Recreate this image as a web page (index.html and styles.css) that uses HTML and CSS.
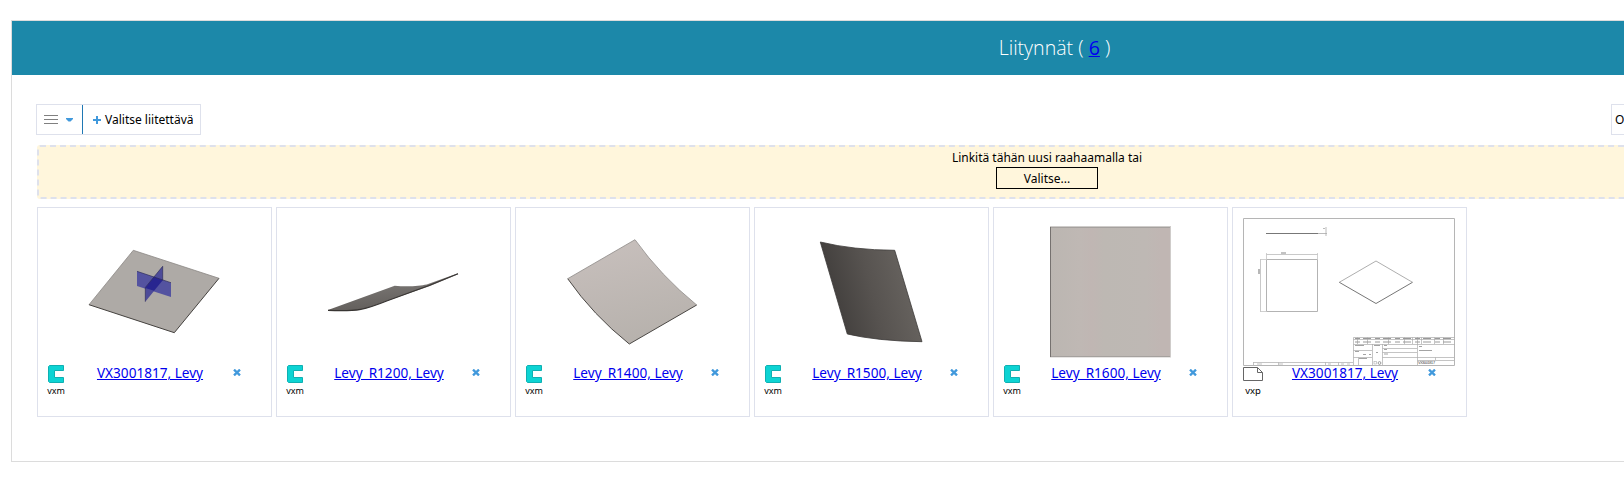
FILE: index.html
```html
<!DOCTYPE html>
<html lang="fi">
<head>
    <meta charset="UTF-8">
    <meta name="viewport" content="width=device-width, initial-scale=1.0">
    <title>Liitynnät</title>
    <link rel="stylesheet" href="styles.css">
</head>
<body>

    <!-- shared icons -->
    <svg class="symbols" width="0" height="0">
        <symbol id="icon-vxm" viewBox="0 0 16 18">
            <path d="M1.5 .5H15.5V5.5H6.5V12.5H15.5V17.5H1.5L.5 16.5V1.5Z" fill="#0dd3d3" stroke="#0fb0b2"/>
        </symbol>
        <symbol id="icon-close" viewBox="0 0 8 7">
            <path d="M1 .6L7 6.4M7 .6L1 6.4" stroke="#4199dc" stroke-width="2.3"/>
        </symbol>
    </svg>

    <div class="panel">
        <div class="panel-header">Liitynnät ( <a href="#">6</a> )</div>
        <div class="panel-body">

            <div class="toolbar">
                <div class="button-group">
                    <button class="menu-button">
                        <svg width="30" height="9" viewBox="0 0 30 9">
                            <path d="M0 .5H14M0 4.5H14M0 8.5H14" stroke="#808080"/>
                            <path d="M22 3H29V4L26.5 6.5H24.5L22 4Z" fill="#4199dc"/>
                        </svg>
                    </button>
                    <button class="add-button">
                        <svg width="8" height="8" viewBox="0 0 8 8"><path d="M4 0V8M0 4H8" stroke="#4199dc" stroke-width="2"/></svg>
                        <span>Valitse liitettävä</span>
                    </button>
                </div>
                <button class="options-button">O</button>
            </div>

            <div class="dropzone">
                <span class="drop-text">Linkitä tähän uusi raahaamalla tai</span>
                <button class="choose-button">Valitse...</button>
            </div>

            <div class="cards">
                <div class="card">
                    <svg class="thumb" viewBox="0 0 233 157">
                        <path d="M95.3 42.3L181 70.3L136.3 124.7L51 96.7Z" fill="#aeaaa6"/>
                        <path d="M51 96.7L95.3 42.3L181 70.3" fill="none" stroke="#8b8885" stroke-width=".8"/>
                        <path d="M51 96.7L136.3 124.7L181 70.3" fill="none" stroke="#45423f"/>
                        <path d="M99 63.3L133 74.7V89L99 78Z" fill="#5453a0"/>
                        <path d="M124.7 58.3V72.3L107.3 93.7V79.5Z" fill="#4d4b99"/>
                        <path d="M116 69L124.7 72.3L116 82.8L107.3 80Z" fill="#282590"/>
                        <path d="M99 63.3L133 74.7M124.7 58.3L107.3 79.5V93.7M124.7 58.3V72.3" fill="none" stroke="#252450" stroke-width=".6"/>
                    </svg>
                    <div class="card-footer">
                        <div class="file-type"><svg width="16" height="18"><use href="#icon-vxm"/></svg><span>vxm</span></div>
                        <a class="card-link" href="#">VX3001817, Levy</a>
                        <svg class="remove" width="8" height="7"><use href="#icon-close"/></svg>
                    </div>
                </div>

                <div class="card">
                    <svg class="thumb" viewBox="0 0 233 157">
                        <defs>
                            <linearGradient id="shade1200" x1="0" y1="0" x2=".3" y2="1">
                                <stop offset="0" stop-color="#858280"/>
                                <stop offset="1" stop-color="#625e5b"/>
                            </linearGradient>
                        </defs>
                        <path d="M51 102L117.7 77.7C130 79 143 78 149.7 76.5L181 65.3V66.2L153 78L109.7 93C90 101 80 104 51 102.5Z" fill="url(#shade1200)"/>
                        <path d="M181 65.7Q168 71 152 77.5L109.7 93C90 101 80 104 51 102.3" fill="none" stroke="#383533" stroke-width="1.2"/>
                    </svg>
                    <div class="card-footer">
                        <div class="file-type"><svg width="16" height="18"><use href="#icon-vxm"/></svg><span>vxm</span></div>
                        <a class="card-link" href="#">Levy_R1200, Levy</a>
                        <svg class="remove" width="8" height="7"><use href="#icon-close"/></svg>
                    </div>
                </div>

                <div class="card">
                    <svg class="thumb" viewBox="0 0 233 157">
                        <defs>
                            <linearGradient id="shade1400" x1=".3" y1="0" x2=".6" y2="1">
                                <stop offset="0" stop-color="#c7bfbc"/>
                                <stop offset="1" stop-color="#b6b1ac"/>
                            </linearGradient>
                        </defs>
                        <path d="M119 31.7Q145 68 180.7 97L113.3 136Q77 107 51.7 70.7Z" fill="url(#shade1400)"/>
                        <path d="M51.7 70.7L119 31.7Q145 68 180.7 97" fill="none" stroke="#8d8986" stroke-width=".8"/>
                        <path d="M180.7 97L113.3 136Q77 107 51.7 70.7" fill="none" stroke="#4b4845"/>
                    </svg>
                    <div class="card-footer">
                        <div class="file-type"><svg width="16" height="18"><use href="#icon-vxm"/></svg><span>vxm</span></div>
                        <a class="card-link" href="#">Levy_R1400, Levy</a>
                        <svg class="remove" width="8" height="7"><use href="#icon-close"/></svg>
                    </div>
                </div>

                <div class="card">
                    <svg class="thumb" viewBox="0 0 233 157">
                        <defs>
                            <linearGradient id="shade1500" gradientUnits="userSpaceOnUse" x1="78" y1="88" x2="152" y2="68">
                                <stop offset="0" stop-color="#43403e"/>
                                <stop offset=".5" stop-color="#575350"/>
                                <stop offset="1" stop-color="#66625e"/>
                            </linearGradient>
                        </defs>
                        <path d="M65.3 34Q98 42 139.7 42.3L167 133.7Q122 133 92.3 126Z" fill="url(#shade1500)" stroke="#3c3a38" stroke-width=".8"/>
                    </svg>
                    <div class="card-footer">
                        <div class="file-type"><svg width="16" height="18"><use href="#icon-vxm"/></svg><span>vxm</span></div>
                        <a class="card-link" href="#">Levy_R1500, Levy</a>
                        <svg class="remove" width="8" height="7"><use href="#icon-close"/></svg>
                    </div>
                </div>

                <div class="card">
                    <svg class="thumb" viewBox="0 0 233 157">
                        <defs>
                            <linearGradient id="shade1600">
                                <stop offset="0" stop-color="#bbb6b1"/>
                                <stop offset=".25" stop-color="#bfb8b4"/>
                                <stop offset=".35" stop-color="#c0b6b3"/>
                                <stop offset=".45" stop-color="#bdb8b3"/>
                                <stop offset=".8" stop-color="#beb8b4"/>
                                <stop offset=".92" stop-color="#c0b6b3"/>
                                <stop offset="1" stop-color="#c0b6b3"/>
                            </linearGradient>
                        </defs>
                        <rect x="56" y="18" width="121" height="131.5" fill="#cfccca"/>
                        <rect x="56" y="19" width="120" height="130" fill="url(#shade1600)"/>
                        <path d="M56 19.5H176M56 148.5H176" stroke="#a5a19e"/>
                        <path d="M56.5 19V149" stroke="#75716f"/>
                    </svg>
                    <div class="card-footer">
                        <div class="file-type"><svg width="16" height="18"><use href="#icon-vxm"/></svg><span>vxm</span></div>
                        <a class="card-link" href="#">Levy_R1600, Levy</a>
                        <svg class="remove" width="8" height="7"><use href="#icon-close"/></svg>
                    </div>
                </div>

                <div class="card">
                    <svg class="thumb" viewBox="0 0 233 157">
                        <g fill="none" stroke="#aaa">
                            <path d="M10.5 10.5H221.5V157.5H10.5Z" stroke="#b5b5b5"/>
                            <!-- side view -->
                            <path d="M33 25.5H85" stroke="#777"/>
                            <path d="M85 25.5H94M93 19V28M90 20.5H92" stroke="#aaa" stroke-width=".8"/>
                            <!-- front view with dimensions -->
                            <path d="M33.5 51.5H84.5V103.5H33.5Z" stroke="#aaa" stroke-width=".9"/>
                            <path d="M33.5 45V51M84.5 45V51M27 51.5H33M27 103.5H33" stroke="#bbb" stroke-width=".7"/>
                            <path d="M33.5 46.5H84.5M27.5 51.5V103.5" stroke="#bbb" stroke-width=".8"/>
                            <path d="M48 45H53M26 61V66" stroke="#888" stroke-width="1.2"/>
                            <!-- isometric view -->
                            <path d="M106.3 74.3L143 53L179.5 74.3" stroke="#999" stroke-width=".8"/>
                            <path d="M106.3 74.3L143 95.5L179.5 74.3" stroke="#666" stroke-width=".9"/>
                            <!-- title block -->
                            <path d="M120.5 129.5H221.5M120.5 136.5H221.5M120.5 131.5H221.5M120.5 157V129.5M139.5 136V157M149.5 136V157M184.5 129V157M120.5 142.5H139M149.5 140.5H184M149.5 144.5H184M149.5 149.5H221M120.5 149.5H139M184.5 152.5H221M125.5 149.5V157M202.5 149.5V152" stroke-width=".7"/>
                            <path d="M124.5 129.5V136M134.5 129.5V136M155.5 129.5V136M171.5 129.5V136M179.5 129.5V136M188.5 129.5V136M201.5 129.5V136M210.5 129.5V136" stroke-width=".7"/>
                            <path d="M122 130.5H220M122 134H218" stroke="#999" stroke-dasharray="5 3 8 4" stroke-width="1"/>
                            <path d="M122 137.5H131M141 137.5H147M151 137.5H154M151 141.5H154M151 146H155M186 138.5H189M186 142.5H199M130 146.5H133M136 146.5H138M122 143.5H126M126 150.5H134M143 144.5H145" stroke="#999" stroke-width=".9"/>
                            <path d="M20 154.5H120M20.5 154.5V157M24 156H29M45.5 154.5V157M46 156H50M92.5 154.5V157M95 156H98M105.5 154.5V157M108 156H111M114 156H117" stroke-width=".7"/>
                            <rect x="141" y="153.5" width="2.5" height="2.5" stroke-width=".6"/>
                            <circle cx="146.5" cy="155" r="1.4" stroke="#777" stroke-width=".7"/>
                        </g>
                        <text class="drawing-no" x="185" y="156.3" textLength="17">VX3001817</text>
                    </svg>
                    <div class="card-footer">
                        <div class="file-type vxp">
                            <svg width="20" height="14" viewBox="0 0 20 14"><path d="M.5 .5H14.5L19.5 5.5V13.5H.5ZM14.5 .5V5.5H19.5" fill="#fff" stroke="#666"/></svg>
                            <span>vxp</span>
                        </div>
                        <a class="card-link" href="#">VX3001817, Levy</a>
                        <svg class="remove" width="8" height="7"><use href="#icon-close"/></svg>
                    </div>
                </div>
            </div>

        </div>
    </div>

</body>
</html>
```

FILE: styles.css
```css
* {
    box-sizing: border-box;
}
body {
    margin: 0;
    padding: 20px 0 0 11px;
    overflow: hidden;
    background-color: white;
    font-family: "Noto Sans", "Open Sans", sans-serif;
    font-size: 12px;
    color: black;
}
button {
    font: inherit;
    color: inherit;
    background: none;
    border: none;
    padding: 0;
}
a {
    color: #0000ee;
}
.symbols {
    display: none;
}
.panel {
    width: 2087px;
    height: 442px;
    border: 1px solid #dcdcdc;
}
.panel-header {
    height: 54px;
    line-height: 53px;
    background-color: #1c88a9;
    color: white;
    text-align: center;
    font-family: "Open Sans", sans-serif;
    font-size: 19.6px;
    font-weight: 300;
}
.panel-header a {
    font-weight: 400;
}
.panel-body {
    padding: 29px 24px 0;
}
.toolbar {
    display: flex;
    height: 31px;
}
.button-group {
    display: flex;
    width: 165px;
    border: 1px solid #dee1ec;
}
.menu-button {
    display: flex;
    align-items: center;
    width: 46px;
    padding-left: 7px;
    border-right: 1px solid #1f78b4;
}
.add-button {
    display: flex;
    align-items: center;
    gap: 4px;
    padding-left: 10px;
    white-space: nowrap;
}
.options-button {
    margin-left: 1410px;
    width: 90px;
    border: 1px solid #dee1ec;
    text-align: left;
    padding-left: 3px;
}
.dropzone {
    display: flex;
    flex-direction: column;
    align-items: center;
    width: 2020px;
    height: 54px;
    margin: 10px 0 8px 1px;
    padding-top: 2px;
    background-color: #fff6dc;
    border: 2px dashed #dee1ec;
    border-radius: 3px;
}
.drop-text {
    line-height: 18px;
}
.choose-button {
    width: 102px;
    height: 22px;
    border: 1px solid black;
    line-height: 19px;
}
.cards {
    display: flex;
    gap: 4px;
    margin-left: 1px;
}
.card {
    width: 235px;
    height: 210px;
    border: 1px solid #dee1ec;
}
.thumb {
    display: block;
    width: 233px;
    height: 157px;
    overflow: visible;
}
.card-footer {
    display: grid;
    grid-template-columns: 36px 132px 8px;
    column-gap: 10px;
    align-items: start;
}
.file-type {
    display: flex;
    flex-direction: column;
    align-items: center;
    font-size: 9px;
    line-height: 12px;
}
.file-type span {
    margin-top: 2px;
}
.file-type.vxp {
    padding: 2px 0 0 4px;
    font-size: 9.5px;
}
.file-type.vxp span {
    margin-top: 4px;
}
.card-link {
    font-size: 13.6px;
    line-height: 16px;
    text-align: center;
    white-space: nowrap;
}
.remove {
    margin-top: 4px;
    margin-left: 7px;
}
.drawing-no {
    font-family: "Liberation Sans", sans-serif;
    font-size: 3.8px;
    fill: #444;
}
```
